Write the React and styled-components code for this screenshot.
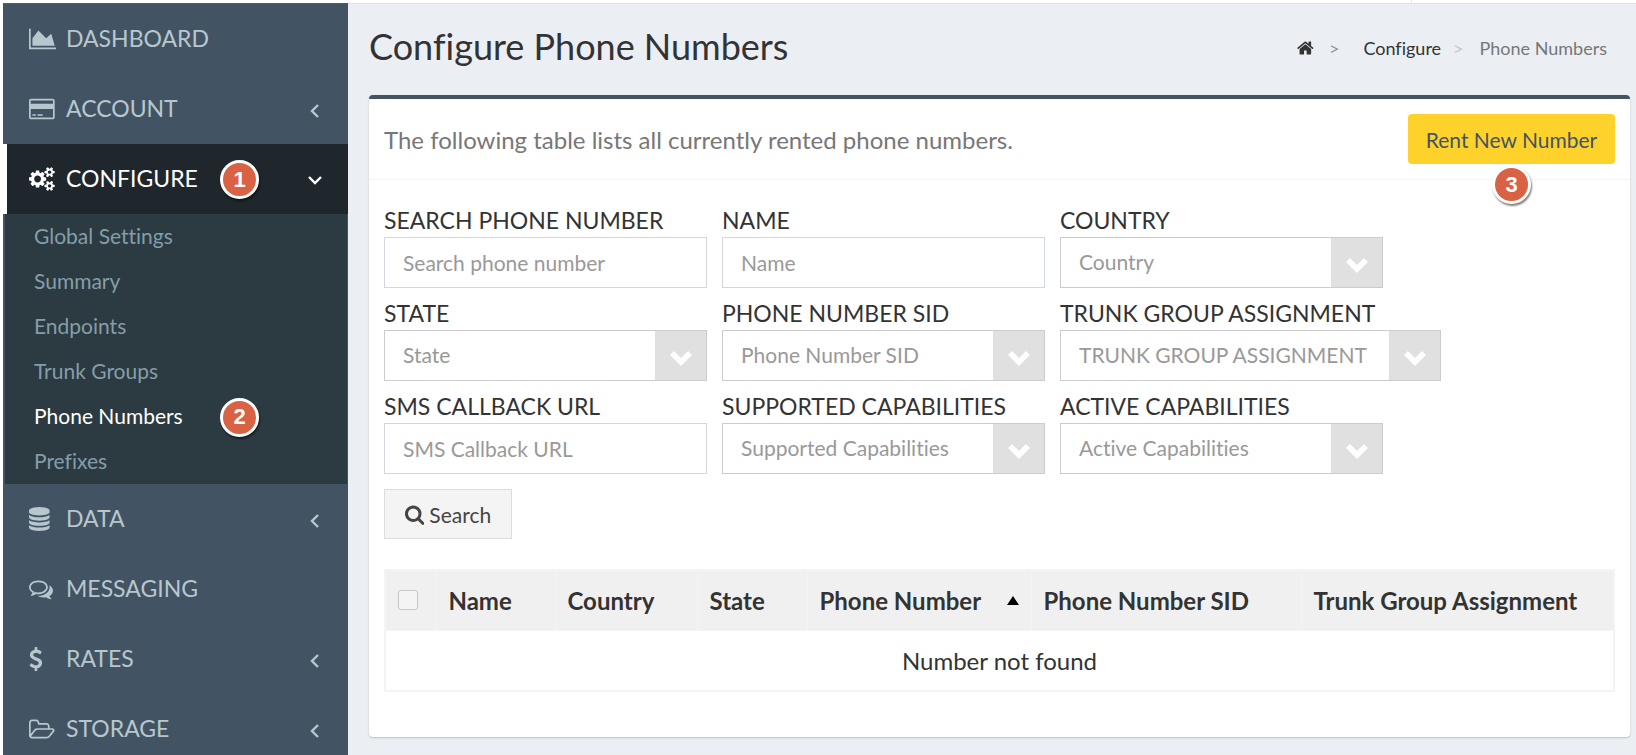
import React from "react";
import styled, { createGlobalStyle } from "styled-components";

const GlobalStyle = createGlobalStyle`
  * {
    box-sizing: border-box;
  }

  body {
    margin: 0;
    background-color: #ffffff;
    color: #333333;
    font-family: Lato, "Open Sans", sans-serif;
    font-size: 23px;
    font-variant-ligatures: none;
  }

  input, select, button {
    font-family: inherit;
    font-variant-ligatures: none;
  }
`;

/* Layout */

const Page = styled.div`
  display: flex;
  flex-direction: column;
  height: 100vh;
  overflow: hidden;
  padding-left: 3px;
`;

const TopBar = styled.header`
  display: flex;
  justify-content: flex-end;
  flex: none;
  height: 3px;
`;

const TopBarMenu = styled.div`
  width: 225px;
  border-left: 1px solid #e4e6ea;
`;

const Columns = styled.div`
  display: flex;
  flex: 1;
  min-height: 0;
`;

const Sidebar = styled.nav`
  flex: none;
  width: 345px;
  overflow: hidden;
  background-color: #425463;
  border-top: 1px solid #4b5c6a;
`;

const Main = styled.main`
  flex: 1;
  min-width: 0;
  padding: 0 6px 0 21px;
  background-color: #ebeff4;
  border-top: 1px solid #dfe3e8;
`;

/* Sidebar */

const MenuList = styled.ul`
  list-style: none;
  margin: 0;
  padding: 0;
`;

const MenuLink = styled.a`
  position: relative;
  display: flex;
  align-items: center;
  height: 70px;
  padding: 0 26px 0 22px;
  border-left: 4px solid ${({ $active }) => ($active ? "#ffffff" : "#425463")};
  background-color: ${({ $active }) => ($active ? "#1f272c" : "#425463")};
  color: ${({ $active }) => ($active ? "#ffffff" : "#b8c7ce")};
  font-size: 23px;
  text-decoration: none;
`;

const MenuIcon = styled.span`
  display: flex;
  width: 37px;
`;

const MenuText = styled.span`
  flex: 1;
  padding-bottom: 2px;
`;

const SubMenu = styled.ul`
  list-style: none;
  margin: 0 1px 0 2px;
  padding: 0;
  background-color: #2c3a41;
`;

const SubMenuLink = styled.a`
  position: relative;
  display: flex;
  align-items: center;
  height: 45px;
  padding: 0 0 2px 29px;
  color: ${({ $active }) => ($active ? "#ffffff" : "#849ea9")};
  font-size: 21px;
  text-decoration: none;
`;

const Badge = styled.span`
  position: absolute;
  top: 50%;
  left: ${({ $left }) => $left};
  display: flex;
  align-items: center;
  justify-content: center;
  width: 39px;
  height: 39px;
  margin-top: -19px;
  border: 3px solid #ffffff;
  border-radius: 50%;
  background-color: #d96244;
  box-shadow: 1px 2px 2px rgba(0, 0, 0, 0.5);
  color: #ffffff;
  font-family: "Liberation Sans", Arial, sans-serif;
  font-size: 22px;
  font-weight: bold;
`;

/* Page header */

const PageHeader = styled.div`
  display: flex;
  align-items: center;
  justify-content: space-between;
  height: 91px;
  padding: 0 23px 6px 0;
`;

const Title = styled.h1`
  margin: 0;
  padding-bottom: 2px;
  font-size: 36px;
  font-weight: 400;
`;

const Breadcrumb = styled.ol`
  display: flex;
  align-items: center;
  list-style: none;
  margin: 0;
  padding: 2px 0 0;
  color: #777777;
  font-size: 18px;

  a {
    display: flex;
    color: #333333;
    text-decoration: none;
  }
`;

const Separator = styled.li`
  padding: 0 ${({ $wide }) => ($wide ? "24px 0 15px" : "16px 0 12px")};
  color: ${({ $wide }) => ($wide ? "#8f939c" : "#c2c5ca")};
`;

/* Panel */

const Panel = styled.section`
  border-top: 4px solid #425463;
  border-radius: 4px;
  background-color: #ffffff;
  box-shadow: 0 1px 2px rgba(0, 0, 0, 0.2);
`;

const PanelHeader = styled.div`
  display: flex;
  align-items: center;
  justify-content: space-between;
  height: 81px;
  padding: 0 15px;
  border-bottom: 1px solid #f4f4f4;
  color: #777777;
  font-size: 24px;
`;

const RentButton = styled.button`
  position: relative;
  width: 207px;
  height: 50px;
  border: none;
  border-radius: 4px;
  background-color: #ffd22b;
  color: #425463;
  font-size: 21px;
  cursor: pointer;
`;

const RentBadge = styled(Badge)`
  top: 51px;
  margin-top: 0;
`;

const PanelBody = styled.div`
  padding: 25px 15px 45px;
`;

const Filters = styled.form`
  display: flex;
  flex-direction: column;
  align-items: flex-start;
  gap: 10px;
`;

const FilterRow = styled.div`
  display: flex;
  gap: 15px;
`;

const Field = styled.div`
  width: ${({ $wide }) => ($wide ? "381px" : "323px")};
`;

const Label = styled.label`
  display: block;
  padding-bottom: 2px;
  line-height: 30px;
  text-transform: uppercase;
  white-space: nowrap;
`;

const TextInput = styled.input`
  display: block;
  width: 100%;
  height: 51px;
  padding: 0 18px;
  border: 1px solid #d2d6de;
  border-radius: 0;
  font-size: 21px;
  outline: none;

  &::placeholder {
    color: #999999;
    opacity: 1;
  }
`;

const SelectBox = styled.div`
  position: relative;
`;

const SelectInput = styled.select`
  display: block;
  width: 100%;
  height: 51px;
  padding: 0 54px 2px 18px;
  appearance: none;
  border: 1px solid #cccccc;
  border-radius: 0;
  background-color: #ffffff;
  color: #999999;
  font-size: 21px;
`;

const SelectArrow = styled.span`
  position: absolute;
  top: 1px;
  right: 1px;
  bottom: 1px;
  display: flex;
  align-items: center;
  justify-content: center;
  width: 51px;
  padding-top: 4px;
  background-color: #e0e0e0;
  pointer-events: none;
`;

const SearchButton = styled.button`
  display: flex;
  align-items: center;
  justify-content: center;
  gap: 5px;
  width: 128px;
  height: 50px;
  margin-top: 5px;
  border: 1px solid #dddddd;
  background-color: #f4f4f4;
  color: #444444;
  font-size: 21px;
  cursor: pointer;
`;

const Table = styled.table`
  width: 100%;
  margin-top: 30px;
  border: 2px solid #f4f4f4;
  border-collapse: collapse;
  table-layout: fixed;
  font-size: 24px;
`;

const HeadCell = styled.th`
  width: ${({ $width }) => $width};
  height: 60px;
  padding: 0 12px;
  border: 1px solid #f4f4f4;
  background-color: #f0f0f0;
  font-weight: 700;
  text-align: left;
  white-space: nowrap;
`;

const HeadContent = styled.span`
  display: flex;
  align-items: center;
  justify-content: space-between;
`;

const EmptyCell = styled.td`
  height: 61px;
  padding: 0;
  text-align: center;
`;

const Checkbox = styled.input`
  display: block;
  width: 20px;
  height: 20px;
  margin: 0;
  appearance: none;
  border: 1px solid #c8c8c8;
  border-radius: 3px;
  background-color: #f4f4f4;
`;

/* Icons */

const icons = {
  chart: {
    width: 2048,
    d: "M2048 1536v128H0V128h128v1408h1920zm-384-1024l256 896H256V832l448-576 576 576z",
  },
  card: {
    width: 1920,
    d: "M1760 128q66 0 113 47t47 113v1216q0 66-47 113t-113 47H160q-66 0-113-47T0 1504V288q0-66 47-113t113-47h1600zM160 256q-13 0-22.500 9.500T128 288v224h1664V288q0-13-9.500-22.500T1760 256H160zm1600 1280q13 0 22.500-9.500t9.500-22.500V896H128v608q0 13 9.500 22.500t22.500 9.500h1600zM256 1408v-128h256v128H256zm384 0v-128h384v128H640z",
  },
  cogs: {
    width: 1920,
    d: "M896 896q0-106-75-181t-181-75-181 75-75 181 75 181 181 75 181-75 75-181zm768 512q0-52-38-90t-90-38-90 38-38 90q0 53 37.500 90.500t90.500 37.500 90.500-37.500 37.500-90.500zm0-1024q0-52-38-90t-90-38-90 38-38 90q0 53 37.500 90.500t90.500 37.500 90.500-37.500 37.500-90.500zm-384 421v185q0 10-7 19.500t-16 10.500l-155 24q-11 35-32 76 34 48 90 115 7 11 7 20 0 12-7 19-23 30-82.500 89.500t-78.500 59.500q-11 0-21-7l-115-90q-37 19-77 31-11 108-23 155-7 24-30 24h-186q-11 0-20-7.500t-10-17.500l-23-153q-34-10-75-31l-118 89q-7 7-20 7-11 0-21-8-144-133-144-160 0-9 7-19 10-14 41-53t47-61q-23-44-35-82l-152-24q-10-1-17-9.500t-7-19.500v-185q0-10 7-19.500t16-10.500l155-24q11-35 32-76-34-48-90-115-7-11-7-20 0-12 7-20 22-30 82-89t79-59q11 0 21 7l115 90q34-18 77-32 11-108 23-154 7-24 30-24h186q11 0 20 7.500t10 17.500l23 153q34 10 75 31l118-89q8-7 20-7 11 0 21 8 144 133 144 160 0 8-7 19-12 16-42 54t-45 60q23 48 34 82l152 23q10 2 17 10.500t7 19.500zm640 533v140q0 16-149 31-12 27-30 52 51 113 51 138 0 4-4 7-122 71-124 71-8 0-46-47t-52-68q-20 2-30 2t-30-2q-14 21-52 68t-46 47q-2 0-124-71-4-3-4-7 0-25 51-138-18-25-30-52-149-15-149-31v-140q0-16 149-31 13-29 30-52-51-113-51-138 0-4 4-7 4-2 35-20t59-34 30-16q8 0 46 46.500t52 67.500q20-2 30-2t30 2q51-71 92-112l6-2q4 0 124 70 4 3 4 7 0 25-51 138 17 23 30 52 149 15 149 31zm0-1024v140q0 16-149 31-12 27-30 52 51 113 51 138 0 4-4 7-122 71-124 71-8 0-46-47t-52-68q-20 2-30 2t-30-2q-14 21-52 68t-46 47q-2 0-124-71-4-3-4-7 0-25 51-138-18-25-30-52-149-15-149-31v-140q0-16 149-31 13-29 30-52-51-113-51-138 0-4 4-7 4-2 35-20t59-34 30-16q8 0 46 46.500t52 67.500q20-2 30-2t30 2q51-71 92-112l6-2q4 0 124 70 4 3 4 7 0 25-51 138 17 23 30 52 149 15 149 31z",
  },
  database: {
    width: 1536,
    d: "M768 768q237 0 443-43t325-127v170q0 69-103 128t-280 93.500-385 34.500-385-34.500T103 896 0 768V598q119 84 325 127t443 43zm0 768q237 0 443-43t325-127v170q0 69-103 128t-280 93.500-385 34.500-385-34.500-280-93.500T0 1536v-170q119 84 325 127t443 43zm0-384q237 0 443-43t325-127v170q0 69-103 128t-280 93.500-385 34.500-385-34.500-280-93.500T0 1152V982q119 84 325 127t443 43zM768 0q208 0 385 34.500t280 93.500 103 128v128q0 69-103 128t-280 93.500T768 640t-385-34.500T103 512 0 384V256q0-69 103-128t280-93.500T768 0z",
  },
  comments: {
    width: 1792,
    d: "M704 384q-153 0-286 52T206.500 577 128 768q0 82 53 158t149 132l97 56-35 84q34-20 62-39l44-31 53 10q78 14 153 14 153 0 286-52t211.500-141T1280 768t-78.500-191T990 436t-286-52zm0-128q191 0 353.500 68.500t256.500 186.500 94 257-94 257-256.500 186.500T704 1280q-86 0-176-16-124 88-278 128-36 9-86 16h-3q-11 0-20.500-8t-11.500-21q-1-3-1-6.500t.5-6.500 2-6l2.500-5 3.500-5.500 4-5 4.500-5 4-4.500q5-6 23-25t26-29.500 22.500-29 25-38.500 20.500-44q-124-72-195-177T0 768q0-139 94-257t256.500-186.500T704 256zm822 1169q10 24 20.500 44t25 38.500 22.500 29 26 29.500 23 25q1 1 4 4.500t4.500 5 4 5 3.500 5.500l2.500 5 2 6 .5 6.500-1 6.500q-3 14-13 22t-22 7q-50-7-86-16-154-40-278-128-90 16-176 16-271 0-472-132 58 4 88 4 161 0 309-45t264-129q125-92 192-212t67-254q0-77-23-152 129 71 204 178t75 230q0 120-71 224.500T1526 1425z",
  },
  dollar: {
    width: 1024,
    d: "M978 1185q0 153-99.500 263.500T620 1585v175q0 14-9 23t-23 9H453q-13 0-22.500-9.500T421 1760v-175q-66-9-127.500-31T192 1509.500t-74-48-46.500-37.500-17.500-18q-17-21-2-41l103-135q7-10 23-12 15-2 24 9l2 2q113 99 243 125 37 8 74 8 81 0 142.500-43t61.500-122q0-28-15-53t-33.500-42-58.500-37.500-66-32-80-32.500q-39-16-61.500-25T349 937.500t-62.500-31T230 871t-53.500-42.500-43.500-49-35.500-58-21-66.500T68 577q0-138 98-242t255-134V32q0-13 9.500-22.500T453 0h135q14 0 23 9t9 23v171q57 6 110.500 23t87 33.500T881 299t39 29 15 14q17 18 5 38l-81 146q-8 15-23 16-14 3-27-7-3-3-14.500-12t-39-26.500-58.500-32-74.500-26T537 427q-95 0-155 43t-60 111q0 26 8.500 48t29.500 41.500 39.500 33 56 31 60.500 27 70 27.500q53 20 81 31.500t76 35 75.500 42.500 62 50 53 63.500 31.500 76.500 13 94z",
  },
  folder: {
    width: 1920,
    top: -192,
    d: "M1781 803q0-35-53-35H640q-40 0-85.500 21.500T483 842l-294 363q-18 24-18 40 0 35 53 35h1088q40 0 86-22t71-53l294-363q18-22 18-39zM640 640h768V480q0-40-28-68t-68-28H736q-40 0-68-28t-28-68v-64q0-40-28-68t-68-28H224q-40 0-68 28t-28 68v853l256-315q44-53 116-87.500T640 640zm1269 163q0 62-46 120l-295 363q-43 53-116 87.500t-140 34.500H224q-92 0-158-66T0 1184V224q0-92 66-158T224 0h320q92 0 158 66t66 158v32h544q92 0 158 66t66 158v160h192q54 0 99 24.500t67 70.500q15 32 15 68z",
  },
  home: {
    width: 1664,
    d: "M1408 992v480q0 26-19 45t-45 19H960v-384H704v384H320q-26 0-45-19t-19-45V992q0-1 .5-3t.5-3l575-474 575 474q1 2 1 6zm223-69l-62 74q-8 9-21 11h-3q-13 0-21-7L832 424l-692 577q-12 8-24 7-13-2-21-11l-62-74q-8-10-7-23.500T37 878L756 279q32-26 76-26t76 26l244 204V288q0-14 9-23t23-9h192q14 0 23 9t9 23v408l219 182q10 8 11 21.500t-7 23.500z",
  },
  search: {
    width: 1664,
    d: "M1152 832q0-185-131.500-316.500T704 384 387.500 515.500 256 832t131.500 316.500T704 1280t316.500-131.500T1152 832zm512 832q0 52-38 90t-90 38q-54 0-90-38l-343-342q-179 124-399 124-143 0-273.500-55.500t-225-150-150-225T0 832t55.500-273.500 150-225 225-150T704 128t273.500 55.500 225 150 150 225T1408 832q0 220-124 399l343 343q37 37 37 90z",
  },
};

const Icon = ({ name, size = 24 }) => {
  const { width, top = 0, d } = icons[name];

  return (
    <svg
      height={size}
      width={(size * width) / 1792}
      viewBox={`0 ${top} ${width} 1792`}
      fill="currentColor"
      aria-hidden="true"
    >
      <path d={d} />
    </svg>
  );
};

const Angle = ({ open }) => (
  <svg width="14" height="16" viewBox="0 0 14 16" overflow="visible" aria-hidden="true">
    <path
      d={open ? "M1 6l6 6 6-6" : "M10 4l-6 6 6 6"}
      fill="none"
      stroke="currentColor"
      strokeWidth="2.4"
    />
  </svg>
);

const Chevron = () => (
  <svg width="24" height="16" viewBox="0 0 24 16" aria-hidden="true">
    <path d="M3 3l9 9 9-9" fill="none" stroke="#ffffff" strokeWidth="5.500" />
  </svg>
);

/* Data */

const menu = [
  { text: "DASHBOARD", icon: "chart" },
  { text: "ACCOUNT", icon: "card", children: [] },
  {
    text: "CONFIGURE",
    icon: "cogs",
    active: true,
    badge: 1,
    children: [
      { text: "Global Settings" },
      { text: "Summary" },
      { text: "Endpoints" },
      { text: "Trunk Groups" },
      { text: "Phone Numbers", active: true, badge: 2 },
      { text: "Prefixes" },
    ],
  },
  { text: "DATA", icon: "database", children: [] },
  { text: "MESSAGING", icon: "comments" },
  { text: "RATES", icon: "dollar", children: [] },
  { text: "STORAGE", icon: "folder", children: [] },
];

const filters = [
  [
    { id: "search", label: "Search Phone Number", hint: "Search phone number" },
    { id: "name", label: "Name", hint: "Name" },
    { id: "country", label: "Country", hint: "Country", select: true },
  ],
  [
    { id: "state", label: "State", hint: "State", select: true },
    { id: "sid", label: "Phone Number SID", hint: "Phone Number SID", select: true },
    {
      id: "trunk",
      label: "Trunk Group Assignment",
      hint: "TRUNK GROUP ASSIGNMENT",
      select: true,
      wide: true,
    },
  ],
  [
    { id: "sms", label: "SMS Callback URL", hint: "SMS Callback URL" },
    { id: "supported", label: "Supported Capabilities", hint: "Supported Capabilities", select: true },
    { id: "active", label: "Active Capabilities", hint: "Active Capabilities", select: true },
  ],
];

const columns = [
  { text: "Name", width: "119px" },
  { text: "Country", width: "142px" },
  { text: "State", width: "110px" },
  { text: "Phone Number", width: "224px", sorted: true },
  { text: "Phone Number SID", width: "270px" },
  { text: "Trunk Group Assignment" },
];

const SideMenu = () => (
  <Sidebar>
    <MenuList>
      {menu.map((item) => (
        <li key={item.text}>
          <MenuLink href="#" $active={item.active}>
            <MenuIcon>
              <Icon name={item.icon} />
            </MenuIcon>
            <MenuText>{item.text}</MenuText>
            {item.badge && <Badge $left="213px">{item.badge}</Badge>}
            {item.children && <Angle open={item.active} />}
          </MenuLink>
          {item.active && (
            <SubMenu>
              {item.children.map((child) => (
                <li key={child.text}>
                  <SubMenuLink href="#" $active={child.active}>
                    {child.text}
                    {child.badge && <Badge $left="215px">{child.badge}</Badge>}
                  </SubMenuLink>
                </li>
              ))}
            </SubMenu>
          )}
        </li>
      ))}
    </MenuList>
  </Sidebar>
);

const FilterField = ({ id, label, hint, select, wide }) => (
  <Field $wide={wide}>
    <Label htmlFor={id}>{label}</Label>
    {select ? (
      <SelectBox>
        <SelectInput id={id}>
          <option>{hint}</option>
        </SelectInput>
        <SelectArrow>
          <Chevron />
        </SelectArrow>
      </SelectBox>
    ) : (
      <TextInput id={id} type="text" placeholder={hint} />
    )}
  </Field>
);

const App = () => {
  return (
    <>
      <GlobalStyle />
      <Page>
        <TopBar>
          <TopBarMenu />
        </TopBar>
        <Columns>
          <SideMenu />
          <Main>
            <PageHeader>
              <Title>Configure Phone Numbers</Title>
              <Breadcrumb>
                <li>
                  <a href="#" aria-label="Home">
                    <Icon name="home" size={18} />
                  </a>
                </li>
                <Separator $wide>&gt;</Separator>
                <li>
                  <a href="#">Configure</a>
                </li>
                <Separator>&gt;</Separator>
                <li>Phone Numbers</li>
              </Breadcrumb>
            </PageHeader>
            <Panel>
              <PanelHeader>
                <span>The following table lists all currently rented phone numbers.</span>
                <RentButton type="button">
                  Rent New Number
                  <RentBadge $left="84px">3</RentBadge>
                </RentButton>
              </PanelHeader>
              <PanelBody>
                <Filters onSubmit={(e) => e.preventDefault()}>
                  {filters.map((row) => (
                    <FilterRow key={row[0].id}>
                      {row.map((field) => (
                        <FilterField key={field.id} {...field} />
                      ))}
                    </FilterRow>
                  ))}
                  <SearchButton type="submit">
                    <Icon name="search" size={21} />
                    Search
                  </SearchButton>
                </Filters>
                <Table>
                  <thead>
                    <tr>
                      <HeadCell $width="51px">
                        <Checkbox type="checkbox" aria-label="Select all" />
                      </HeadCell>
                      {columns.map((column) => (
                        <HeadCell key={column.text} $width={column.width}>
                          <HeadContent>
                            {column.text}
                            {column.sorted && (
                              <svg width="12" height="9" viewBox="0 0 12 9" aria-hidden="true">
                                <path d="M6 0l6 9H0z" fill="#000000" />
                              </svg>
                            )}
                          </HeadContent>
                        </HeadCell>
                      ))}
                    </tr>
                  </thead>
                  <tbody>
                    <tr>
                      <EmptyCell colSpan={7}>Number not found</EmptyCell>
                    </tr>
                  </tbody>
                </Table>
              </PanelBody>
            </Panel>
          </Main>
        </Columns>
      </Page>
    </>
  );
};

export default App;
